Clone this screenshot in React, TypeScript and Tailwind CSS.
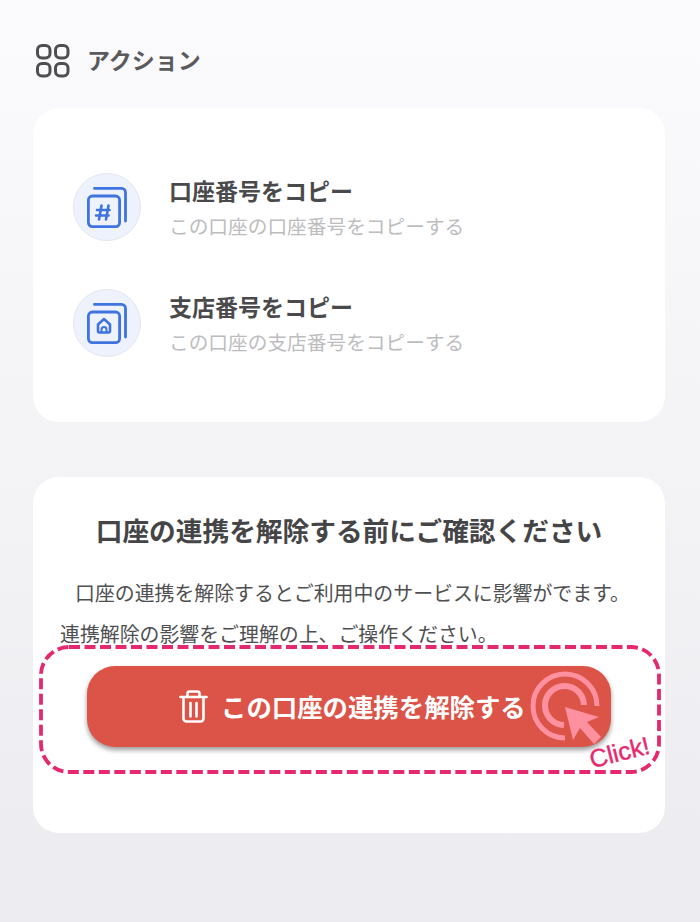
const FONT = "font-['Noto_Sans_CJK_JP','Noto_Sans',sans-serif]";

function GridIcon() {
  return (
    <svg width="36" height="36" viewBox="0 0 36 36" fill="none" stroke="#4f4f52" strokeWidth="3">
      <rect x="2.5" y="2.500" width="12.500" height="12.500" rx="4.500" />
      <rect x="20.5" y="2.500" width="12.500" height="12.500" rx="4.500" />
      <rect x="2.5" y="20.500" width="12.500" height="12.500" rx="4.500" />
      <rect x="20.5" y="20.500" width="12.500" height="12.500" rx="4.500" />
    </svg>
  );
}

function CopyFrame({ children }: { children: React.ReactNode }) {
  return (
    <svg width="42" height="42" viewBox="0 0 42 42" fill="none" stroke="#3f73e0" strokeWidth="2.800" strokeLinecap="round" strokeLinejoin="round">
      <path d="M8.500 2.400h27a4 4 0 0 1 4 4v28.600" />
      <rect x="2.400" y="10" width="31.200" height="30.600" rx="4" />
      {children}
    </svg>
  );
}

function HashIcon() {
  return (
    <CopyFrame>
      <path d="M15.500 19.500l-2.500 14M22.500 19.500l-2.500 14M11 24h12.500M10 29.500h12.500" strokeWidth="2.600" />
    </CopyFrame>
  );
}

function BranchIcon() {
  return (
    <CopyFrame>
      <path d="M12 22.500l6-5.500 6 5.500v6.500a1.500 1.500 0 0 1-1.500 1.500h-9a1.500 1.500 0 0 1-1.500-1.500z" strokeWidth="2.600" />
      <path d="M15.500 30v-2.500a2.500 2.500 0 0 1 5 0v2.500" strokeWidth="2" />
    </CopyFrame>
  );
}

function TrashIcon() {
  return (
    <svg width="29" height="33" viewBox="0 0 29 33" fill="none" stroke="#ffffff" strokeWidth="2.600" strokeLinecap="round" strokeLinejoin="round">
      <path d="M1.500 7h26" />
      <path d="M8.500 6.500V3.500a2 2 0 0 1 2-2h8a2 2 0 0 1 2 2v3" />
      <path d="M4.500 7.500v21a3 3 0 0 0 3 3h14a3 3 0 0 0 3-3v-21" />
      <path d="M11.500 13v13.500M17.500 13v13.500" />
    </svg>
  );
}

function ClickCursor() {
  return (
    <svg width="76" height="76" viewBox="0 0 76 76" fill="none">
      <path d="M37 68A32 32 0 1 1 69 36" stroke="#ff909f" strokeWidth="5" />
      <path d="M36 55A19.500 19.500 0 1 1 56 35" stroke="#ff909f" strokeWidth="6" />
      <path d="M37 37L71 47 59 52 73 67 66 74 52 58 45 70z" fill="#ff909f" />
    </svg>
  );
}

function ActionRow({ icon, title, sub }: { icon: React.ReactNode; title: string; sub: string }) {
  return (
    <div className="flex items-center gap-7">
      <div className="flex h-[68px] w-[68px] shrink-0 items-center justify-center rounded-full border border-[#e3e6ee] bg-[#edf2fc]">
        {icon}
      </div>
      <div>
        <div className="text-[23px] leading-[34px] font-bold text-[#4a4a4c]">{title}</div>
        <div className="mt-[4px] text-[19.7px] leading-[30px] text-[#bdbdbf]">{sub}</div>
      </div>
    </div>
  );
}

export default function App() {
  return (
    <div className={`${FONT} flex h-[922px] w-[700px] flex-col bg-gradient-to-b from-[#fbfafc] to-[#ecebef] pr-[35px] pl-[33px]`}>
      <div className="mt-[43px] flex h-[35px] items-center gap-[16px] pl-[2px]">
        <GridIcon />
        <span className="-mt-[3px] text-[23px] leading-none font-bold text-[#5a5a5d]">アクション</span>
      </div>

      <div className="mt-[30px] flex h-[314px] flex-col gap-[48px] rounded-[26px] bg-white pt-[65px] pl-[40px]">
        <ActionRow icon={<HashIcon />} title="口座番号をコピー" sub="この口座の口座番号をコピーする" />
        <ActionRow icon={<BranchIcon />} title="支店番号をコピー" sub="この口座の支店番号をコピーする" />
      </div>

      <div className="relative mt-[55px] h-[356px] rounded-[26px] bg-white">
        <h2 className="pt-[33px] text-center text-[26.7px] leading-[40px] font-bold text-[#454547]">
          口座の連携を解除する前にご確認ください
        </h2>
        <p className="mt-[22px] px-[27px] indent-[15px] text-[19.9px] leading-[41px] whitespace-nowrap text-[#4f4f52]">
          口座の連携を解除するとご利用中のサービスに影響がでます。
          <br />
          連携解除の影響をご理解の上、ご操作ください。
        </p>

        <div className="mx-[54px] mt-[12px] flex h-[81px] items-center justify-start gap-[13px] rounded-[28px] bg-[#dc5347] pl-[92px] shadow-[0_3px_5px_rgba(0,0,0,0.4)]">
          <TrashIcon />
          <span className="text-[25.4px] font-bold text-white">この口座の連携を解除する</span>
        </div>

        <svg className="absolute top-[168px] left-[6px]" width="622" height="129" viewBox="0 0 622 129" fill="none">
          <rect x="2" y="2" width="618" height="125" rx="28" stroke="#e6286e" strokeWidth="3.800" strokeDasharray="11 4.500" />
        </svg>
        <div className="absolute top-[193px] left-[495px]">
          <ClickCursor />
        </div>
        <div className="absolute top-[263px] left-[556px] -rotate-[14deg] font-['Liberation_Sans',sans-serif] text-[25px] leading-none text-[#e6286e] [-webkit-text-stroke:0.4px_#e6286e]">
          Click!
        </div>
      </div>
    </div>
  );
}
